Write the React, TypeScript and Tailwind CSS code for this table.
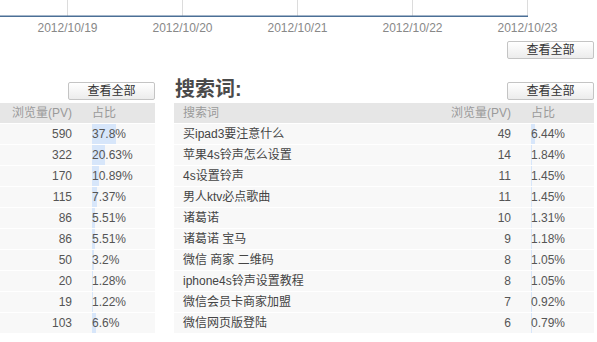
import React from 'react';

const dates = ['2012/10/19', '2012/10/20', '2012/10/21', '2012/10/22', '2012/10/23'];

const pvRows: [number, string][] = [
  [590, '37.8%'],
  [322, '20.63%'],
  [170, '10.89%'],
  [115, '7.37%'],
  [86, '5.51%'],
  [86, '5.51%'],
  [50, '3.2%'],
  [20, '1.28%'],
  [19, '1.22%'],
  [103, '6.6%'],
];

const keywordRows: [string, number, string][] = [
  ['买ipad3要注意什么', 49, '6.44%'],
  ['苹果4s铃声怎么设置', 14, '1.84%'],
  ['4s设置铃声', 11, '1.45%'],
  ['男人ktv必点歌曲', 11, '1.45%'],
  ['诸葛诺', 10, '1.31%'],
  ['诸葛诺 宝马', 9, '1.18%'],
  ['微信 商家 二维码', 8, '1.05%'],
  ['iphone4s铃声设置教程', 8, '1.05%'],
  ['微信会员卡商家加盟', 7, '0.92%'],
  ['微信网页版登陆', 6, '0.79%'],
];

const ViewAll = () => (
  <button className="w-[87px] h-[18px] border border-[#c4c4c4] rounded-[2px] bg-gradient-to-b from-white to-[#ececec] text-[12px] leading-[16px] text-[#333]">
    查看全部
  </button>
);

// percent cell with the little blue bar behind the text
const Pct = ({ value }: { value: string }) => {
  const w = Math.max(1, (parseFloat(value) / 100) * 63);
  return (
    <div className="relative h-[20px]">
      <div className="absolute left-0 top-0 h-full bg-[#d7e6fa]" style={{ width: `${w}px` }} />
      <span className="relative">{value}</span>
    </div>
  );
};

const App = () => {
  return (
    <div
      className="w-[597px] h-[342px] bg-white overflow-hidden text-[12px] text-[#555]"
      style={{ fontFamily: '"Liberation Sans", "Noto Sans CJK SC", sans-serif' }}
    >
      <svg width="597" height="17" className="block">
        {[67, 182, 297, 412, 527].map((x) => (
          <line key={x} x1={x + 0.5} y1={0} x2={x + 0.5} y2={16} stroke="#dcdcdc" strokeWidth={1} />
        ))}
        <line x1={0} y1={16.5} x2={528} y2={16.5} stroke="#4b6f96" strokeWidth={2} />
      </svg>
      <div className="flex pl-[10px] mt-[2px] h-[18px] leading-[18px] text-[#888]">
        {dates.map((d) => (
          <div key={d} className="w-[115px] text-center">
            {d}
          </div>
        ))}
      </div>
      <div className="flex justify-end pr-[3px] mt-[4px]">
        <ViewAll />
      </div>

      <div className="flex mt-[19px] pr-[3px]">
        <div className="w-[155px]">
          <div className="flex justify-end h-[22px] pt-[4px]">
            <ViewAll />
          </div>
          <div className="mt-[3px] flex flex-col gap-px">
            <div className="grid grid-cols-[92px_63px] h-[20px] leading-[20px] bg-[#e6e6e6] text-[#9a9a9a]">
              <div className="text-right pr-[20px]">浏览量(PV)</div>
              <div>占比</div>
            </div>
            {pvRows.map(([pv, pct], i) => (
              <div key={i} className="grid grid-cols-[92px_63px] h-[20px] leading-[20px] bg-[#f8f8f8]">
                <div className="text-right pr-[20px]">{pv}</div>
                <Pct value={pct} />
              </div>
            ))}
          </div>
        </div>

        <div className="ml-[19px] flex-1">
          <div className="flex justify-between h-[22px]">
            <div className="pl-[1px] text-[20px] leading-[22px] font-bold text-[#4a4a4a]">搜索词:</div>
            <div className="pt-[4px]">
              <ViewAll />
            </div>
          </div>
          <div className="mt-[3px] flex flex-col gap-px">
            <div className="grid grid-cols-[1fr_92px_63px] h-[20px] leading-[20px] bg-[#e6e6e6] text-[#9a9a9a]">
              <div className="pl-[9px]">搜索词</div>
              <div className="text-right pr-[20px]">浏览量(PV)</div>
              <div>占比</div>
            </div>
            {keywordRows.map(([kw, pv, pct], i) => (
              <div key={i} className="grid grid-cols-[1fr_92px_63px] h-[20px] leading-[20px] bg-[#f8f8f8]">
                <div className="pl-[9px] text-[#444]">{kw}</div>
                <div className="text-right pr-[20px]">{pv}</div>
                <Pct value={pct} />
              </div>
            ))}
          </div>
        </div>
      </div>
    </div>
  );
};

export default App;
